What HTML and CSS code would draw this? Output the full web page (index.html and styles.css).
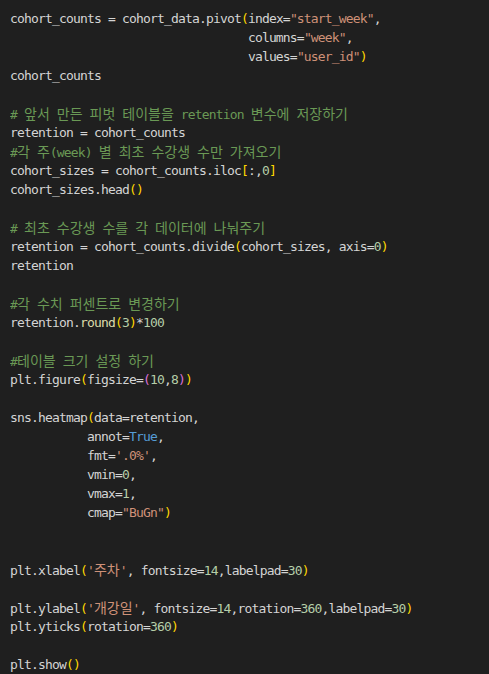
FILE: index.html
```html
<!DOCTYPE html>
<html lang="ko">
<head>
<meta charset="utf-8">
<title>cohort retention</title>
<link rel="stylesheet" href="styles.css">
</head>
<body>
<div class="editor">
<div class="ln">cohort_counts = cohort_data.pivot<span class="b1">(</span>index=<span class="s">"start_week"</span>,</div>
<div class="ln">                                  columns=<span class="s">"week"</span>,</div>
<div class="ln">                                  values=<span class="s">"user_id"</span><span class="b1">)</span></div>
<div class="ln">cohort_counts</div>
<div class="ln"></div>
<div class="ln"><span class="c"># <span class="ko">앞서</span> <span class="ko">만든</span> <span class="ko">피벗</span> <span class="ko">테이블을</span> retention <span class="ko">변수에</span> <span class="ko">저장하기</span></span></div>
<div class="ln">retention = cohort_counts</div>
<div class="ln"><span class="c">#<span class="ko">각</span> <span class="ko">주</span>(week) <span class="ko">별</span> <span class="ko">최초</span> <span class="ko">수강생</span> <span class="ko">수만</span> <span class="ko">가져오기</span></span></div>
<div class="ln">cohort_sizes = cohort_counts.iloc<span class="b1">[</span>:,<span class="n">0</span><span class="b1">]</span></div>
<div class="ln">cohort_sizes.head<span class="b1">()</span></div>
<div class="ln"></div>
<div class="ln"><span class="c"># <span class="ko">최초</span> <span class="ko">수강생</span> <span class="ko">수를</span> <span class="ko">각</span> <span class="ko">데이터에</span> <span class="ko">나눠주기</span></span></div>
<div class="ln">retention = cohort_counts.divide<span class="b1">(</span>cohort_sizes, axis=<span class="n">0</span><span class="b1">)</span></div>
<div class="ln">retention</div>
<div class="ln"></div>
<div class="ln"><span class="c">#<span class="ko">각</span> <span class="ko">수치</span> <span class="ko">퍼센트로</span> <span class="ko">변경하기</span></span></div>
<div class="ln">retention.<span class="f">round</span><span class="b1">(</span><span class="n">3</span><span class="b1">)</span>*<span class="n">100</span></div>
<div class="ln"></div>
<div class="ln"><span class="c">#<span class="ko">테이블</span> <span class="ko">크기</span> <span class="ko">설정</span> <span class="ko">하기</span></span></div>
<div class="ln">plt.figure<span class="b1">(</span>figsize=<span class="b2">(</span><span class="n">10</span>,<span class="n">8</span><span class="b2">)</span><span class="b1">)</span></div>
<div class="ln"></div>
<div class="ln">sns.heatmap<span class="b1">(</span>data=retention,</div>
<div class="ln">           annot=<span class="k">True</span>,</div>
<div class="ln">           fmt=<span class="s">'.0%'</span>,</div>
<div class="ln">           vmin=<span class="n">0</span>,</div>
<div class="ln">           vmax=<span class="n">1</span>,</div>
<div class="ln">           cmap=<span class="s">"BuGn"</span><span class="b1">)</span></div>
<div class="ln"></div>
<div class="ln"></div>
<div class="ln">plt.xlabel<span class="b1">(</span><span class="s">'<span class="ko">주차</span>'</span>, fontsize=<span class="n">14</span>,labelpad=<span class="n">30</span><span class="b1">)</span></div>
<div class="ln"></div>
<div class="ln">plt.ylabel<span class="b1">(</span><span class="s">'<span class="ko">개강일</span>'</span>, fontsize=<span class="n">14</span>,rotation=<span class="n">360</span>,labelpad=<span class="n">30</span><span class="b1">)</span></div>
<div class="ln">plt.yticks<span class="b1">(</span>rotation=<span class="n">360</span><span class="b1">)</span></div>
<div class="ln"></div>
<div class="ln">plt.show<span class="b1">()</span></div>
</div>
</body>
</html>
```
FILE: styles.css
```css
html, body {
  margin: 0;
  padding: 0;
  background: #1f1f1f;
  overflow: hidden;
}
.editor {
  padding: 9px 0 0 10px;
  color: #d4d4d4;
  font-family: "DejaVu Sans Mono", "Noto Sans CJK KR", monospace;
  font-size: 13px;
  letter-spacing: -0.83px;
}
.ln {
  height: 19px;
  line-height: 19px;
  white-space: pre;
  overflow: hidden;
}
.ko {
  font-family: "Noto Sans CJK KR", sans-serif;
  font-size: 14px;
  letter-spacing: 0;
}
.c { color: #6a9955; }
.s { color: #ce9178; }
.n { color: #b5cea8; }
.k { color: #569cd6; }
.f { color: #dcdcaa; }
.b1 { color: #ffd700; }
.b2 { color: #da70d6; }
```
